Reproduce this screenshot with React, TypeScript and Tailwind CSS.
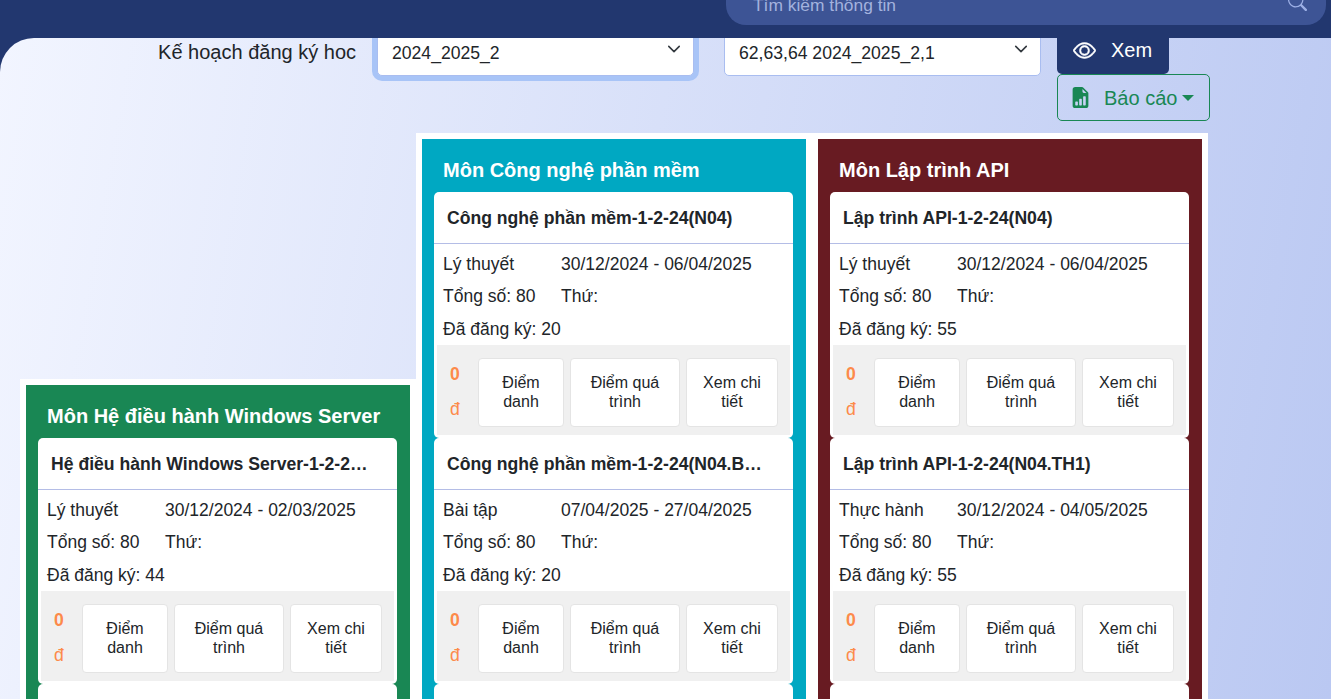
import { BsEye, BsFileEarmarkBarGraphFill, BsSearch } from 'react-icons/bs';

type ClassItem = {
  title: string;
  kind: string;
  dates: string;
  registered: number;
};

type Subject = {
  name: string;
  color: string;
  offset: string;
  classes: ClassItem[];
};

const subjects: Subject[] = [
  {
    name: 'Môn Hệ điều hành Windows Server',
    color: 'bg-[#198754]',
    offset: 'mt-[246px]',
    classes: [
      { title: 'Hệ điều hành Windows Server-1-2-24(N04)', kind: 'Lý thuyết', dates: '30/12/2024 - 02/03/2025', registered: 44 },
      { title: 'Hệ điều hành Windows Server-1-2-24(N04.TH1)', kind: 'Thực hành', dates: '03/03/2025 - 04/05/2025', registered: 44 },
    ],
  },
  {
    name: 'Môn Công nghệ phần mềm',
    color: 'bg-[#00a8c2]',
    offset: 'mt-0',
    classes: [
      { title: 'Công nghệ phần mềm-1-2-24(N04)', kind: 'Lý thuyết', dates: '30/12/2024 - 06/04/2025', registered: 20 },
      { title: 'Công nghệ phần mềm-1-2-24(N04.BT1)', kind: 'Bài tập', dates: '07/04/2025 - 27/04/2025', registered: 20 },
      { title: 'Công nghệ phần mềm-1-2-24(N04.TH1)', kind: 'Thực hành', dates: '07/04/2025 - 27/04/2025', registered: 20 },
    ],
  },
  {
    name: 'Môn Lập trình API',
    color: 'bg-[#681b22]',
    offset: 'mt-0',
    classes: [
      { title: 'Lập trình API-1-2-24(N04)', kind: 'Lý thuyết', dates: '30/12/2024 - 06/04/2025', registered: 55 },
      { title: 'Lập trình API-1-2-24(N04.TH1)', kind: 'Thực hành', dates: '30/12/2024 - 04/05/2025', registered: 55 },
      { title: 'Lập trình API-1-2-24(N04.TH2)', kind: 'Thực hành', dates: '30/12/2024 - 04/05/2025', registered: 55 },
    ],
  },
];

function Chevron() {
  return (
    <svg className="absolute right-[12px] top-[11px] w-[14px] h-[14px] text-[#343a40]" viewBox="0 0 16 16" fill="none">
      <path d="M2 5l6 6 6-6" stroke="currentColor" strokeWidth="1.8" strokeLinecap="round" strokeLinejoin="round" />
    </svg>
  );
}

function ClassCard({ item }: { item: ClassItem }) {
  return (
    <div className="h-[246px] shrink-0 rounded-[5px] bg-white text-[#212529]">
      <div className="h-[52px] border-b border-[#b4bde6] pl-[13px] pr-[26px] pt-[15px] text-[17.6px] leading-[22px] font-bold truncate">
        {item.title}
      </div>
      <div className="px-[9px] text-[17.5px] leading-[33px] pt-[4px]">
        <div className="flex h-[32px]">
          <span className="w-[118px]">{item.kind}</span>
          <span>{item.dates}</span>
        </div>
        <div className="flex h-[33px]">
          <span className="w-[118px]">Tổng số: 80</span>
          <span>Thứ:</span>
        </div>
        <div className="h-[32px]">Đã đăng ký: {item.registered}</div>
      </div>
      <div className="mx-[3px] h-[90px] bg-[#f0f0f0] flex items-center pt-[4px] pl-[13px] pr-[12px]">
        <div className="w-[28px] shrink-0 text-[#fd8a4a] text-[17.6px] leading-[35px]">
          <div className="font-bold">0</div>
          <div>đ</div>
        </div>
        <div className="flex gap-[6px] flex-1 text-[#212529] text-[16px] leading-[19px] text-center">
          <button className="w-[86px] h-[69px] rounded bg-white border border-[#e4e4e4] px-3">Điểm danh</button>
          <button className="w-[110px] h-[69px] rounded bg-white border border-[#e4e4e4] px-3">Điểm quá trình</button>
          <button className="w-[92px] h-[69px] rounded bg-white border border-[#e4e4e4] px-3">Xem chi tiết</button>
        </div>
      </div>
    </div>
  );
}

function SubjectColumn({ subject }: { subject: Subject }) {
  return (
    <div className={`w-[396px] shrink-0 border-[6px] border-white ${subject.color} ${subject.offset} pl-[12px] pr-[13px] h-[700px] overflow-hidden`}>
      <h3 className="pl-[9px] pt-[19px] h-[53px] text-[20px] leading-[24px] font-bold text-white">{subject.name}</h3>
      <div className="flex flex-col">
        {subject.classes.map((c) => (
          <ClassCard key={c.title} item={c} />
        ))}
      </div>
    </div>
  );
}

export default function App() {
  return (
    <div className="h-[699px] overflow-hidden bg-[#22376f] font-['Liberation_Sans',Arial,sans-serif]">
      <header className="h-[38px] flex justify-end pr-[5px]">
        <div className="w-[600px] h-[25px] rounded-b-[20px] bg-[#3d5495] flex items-start justify-between pl-[27px] pr-[19px] overflow-hidden">
          <span className="text-[17.4px] leading-[20px] text-[#a3b2de] -mt-[5px]">Tìm kiếm thông tin</span>
          <BsSearch className="w-[19px] h-[19px] text-[#9db0e6] -mt-[8px]" />
        </div>
      </header>
      <main className="h-[661px] overflow-hidden rounded-tl-[34px] bg-[linear-gradient(100deg,#f2f5ff,#bac8f2)]">
        <div className="flex items-start h-[103px] -mt-[8px]">
          <label className="w-[356px] pt-[10px] text-right text-[20px] leading-[24px] text-[#212529]">Kế hoạch đăng ký hoc</label>
          <div className="relative ml-[21px] w-[317px] h-[46px] rounded-[5px] bg-white border border-[#a9bdf0] ring-[5px] ring-[#a8c4f7] pl-[14px] pt-[10px] text-[17.6px] leading-[24px] text-[#212529]">
            2024_2025_2
            <Chevron />
          </div>
          <div className="relative ml-[30px] w-[317px] h-[46px] rounded-[5px] bg-white border border-[#a9bdf0] pl-[14px] pt-[10px] text-[17.6px] leading-[24px] text-[#212529]">
            62,63,64 2024_2025_2,1
            <Chevron />
          </div>
          <div className="ml-[16px] flex flex-col items-start">
            <button className="w-[112px] h-[44px] rounded-b-[5px] bg-[#22376f] text-white flex items-center pl-[16px] pb-[4px] gap-[15px] text-[20px] leading-[24px]">
              <BsEye className="w-[23px] h-[23px]" stroke="currentColor" strokeWidth={0.4} />
              Xem
            </button>
            <button className="w-[153px] h-[47px] rounded-[5px] border border-[#198754] text-[#198754] flex items-center pl-[12px] text-[20px] leading-[24px]">
              <BsFileEarmarkBarGraphFill className="w-[21px] h-[21px]" />
              <span className="ml-[13px]">Báo cáo</span>
              <span className="ml-[5px] w-0 h-0 border-x-[6px] border-t-[6px] border-x-transparent border-t-[#198754]" />
            </button>
          </div>
        </div>
        <div className="flex items-start pl-[20px]">
          {subjects.map((s) => (
            <SubjectColumn key={s.name} subject={s} />
          ))}
        </div>
      </main>
    </div>
  );
}
